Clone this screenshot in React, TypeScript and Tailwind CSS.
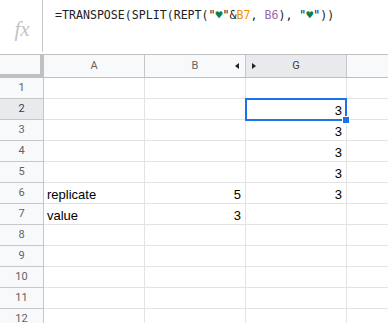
import React from "react";

const rows: { n: number; a?: string; b?: string; g?: string }[] = [
  { n: 1 },
  { n: 2, g: "3" },
  { n: 3, g: "3" },
  { n: 4, g: "3" },
  { n: 5, g: "3" },
  { n: 6, a: "replicate", b: "5", g: "3" },
  { n: 7, a: "value", b: "3" },
  { n: 8 },
  { n: 9 },
  { n: 10 },
  { n: 11 },
  { n: 12 },
];

const cellFont = { fontFamily: '"Liberation Sans", Arial, sans-serif' };
const hdrFont = { fontFamily: 'Roboto, "Liberation Sans", Arial, sans-serif' };

export default function App() {
  return (
    <div className="relative w-[388px] h-[323px] overflow-hidden bg-white">
      {/* formula bar */}
      <div className="flex h-[54px]">
        <div className="w-[43px] h-[52px] flex items-center justify-center border-r border-[#c7c7c7] shrink-0">
          <span
            className="italic text-[21px] text-[#c4c4c4] mt-[8px] ml-[2px]"
            style={{ fontFamily: '"Liberation Serif", "Times New Roman", serif' }}
          >
            fx
          </span>
        </div>
        <div
          className="pl-[12px] pt-[7px] text-[11.6px] text-[#222] whitespace-pre"
          style={{ fontFamily: '"DejaVu Sans Mono", "Liberation Mono", monospace' }}
        >
          =TRANSPOSE(SPLIT(REPT("<span className="text-[#0b8043]">♥</span>"&amp;
          <span className="text-[#f09300]">B7</span>, <span className="text-[#9a6bb0]">B6</span>), "
          <span className="text-[#0b8043]">♥</span>"))
        </div>
      </div>

      {/* header row */}
      <div className="flex h-[24px] border-t border-b border-[#c0c0c0] bg-[#f8f9fa]" style={hdrFont}>
        <div className="w-[44px] shrink-0 border-r-4 border-b-4 border-[#c0c0c0] h-[23px] -mb-px bg-[#f8f9fa]" />
        <div className="w-[101px] shrink-0 border-r border-[#c7c7c7] flex items-center justify-center text-[11px] text-[#5f6368]">
          A
        </div>
        <div className="relative w-[101px] shrink-0 border-r border-[#c7c7c7] flex items-center justify-center text-[11px] text-[#5f6368]">
          B
          <span className="absolute right-[6px] top-[8px] w-0 h-0 border-y-[3px] border-y-transparent border-r-[4px] border-r-[#222]" />
        </div>
        <div className="relative w-[101px] shrink-0 border-r border-[#c7c7c7] bg-[#e8eaed] flex items-center justify-center text-[11px] text-[#3c4043]">
          G
          <span className="absolute left-[6px] top-[8px] w-0 h-0 border-y-[3px] border-y-transparent border-l-[4px] border-l-[#222]" />
        </div>
        <div className="flex-1" />
      </div>

      {/* rows */}
      {rows.map((r) => (
        <div key={r.n} className="flex h-[21px]">
          <div
            className={`w-[44px] shrink-0 border-r border-b border-[#c7c7c7] flex items-center justify-center pt-[1px] text-[11px] ${
              r.n === 2 ? "bg-[#e8eaed] text-[#3c4043]" : "bg-[#f8f9fa] text-[#5f6368]"
            }`}
            style={hdrFont}
          >
            {r.n}
          </div>
          <div
            className="w-[101px] shrink-0 border-r border-b border-[#e2e3e3] flex items-end pl-[3px] text-[13px] leading-[17px] text-black"
            style={cellFont}
          >
            {r.a}
          </div>
          <div
            className="w-[101px] shrink-0 border-r border-b border-[#e2e3e3] flex items-end justify-end pr-[4px] text-[13px] leading-[17px] text-black"
            style={cellFont}
          >
            {r.b}
          </div>
          <div
            className="w-[101px] shrink-0 border-r border-b border-[#e2e3e3] flex items-end justify-end pr-[4px] text-[13px] leading-[17px] text-black"
            style={cellFont}
          >
            {r.g}
          </div>
          <div className="flex-1 border-b border-[#e2e3e3]" />
        </div>
      ))}

      {/* selection */}
      <div className="absolute left-[245px] top-[98px] w-[102px] h-[23px] border-2 border-[#1a73e8] pointer-events-none" />
      <div className="absolute left-[342px] top-[116px] w-[8px] h-[8px] bg-[#1a73e8] border border-white" />
    </div>
  );
}
